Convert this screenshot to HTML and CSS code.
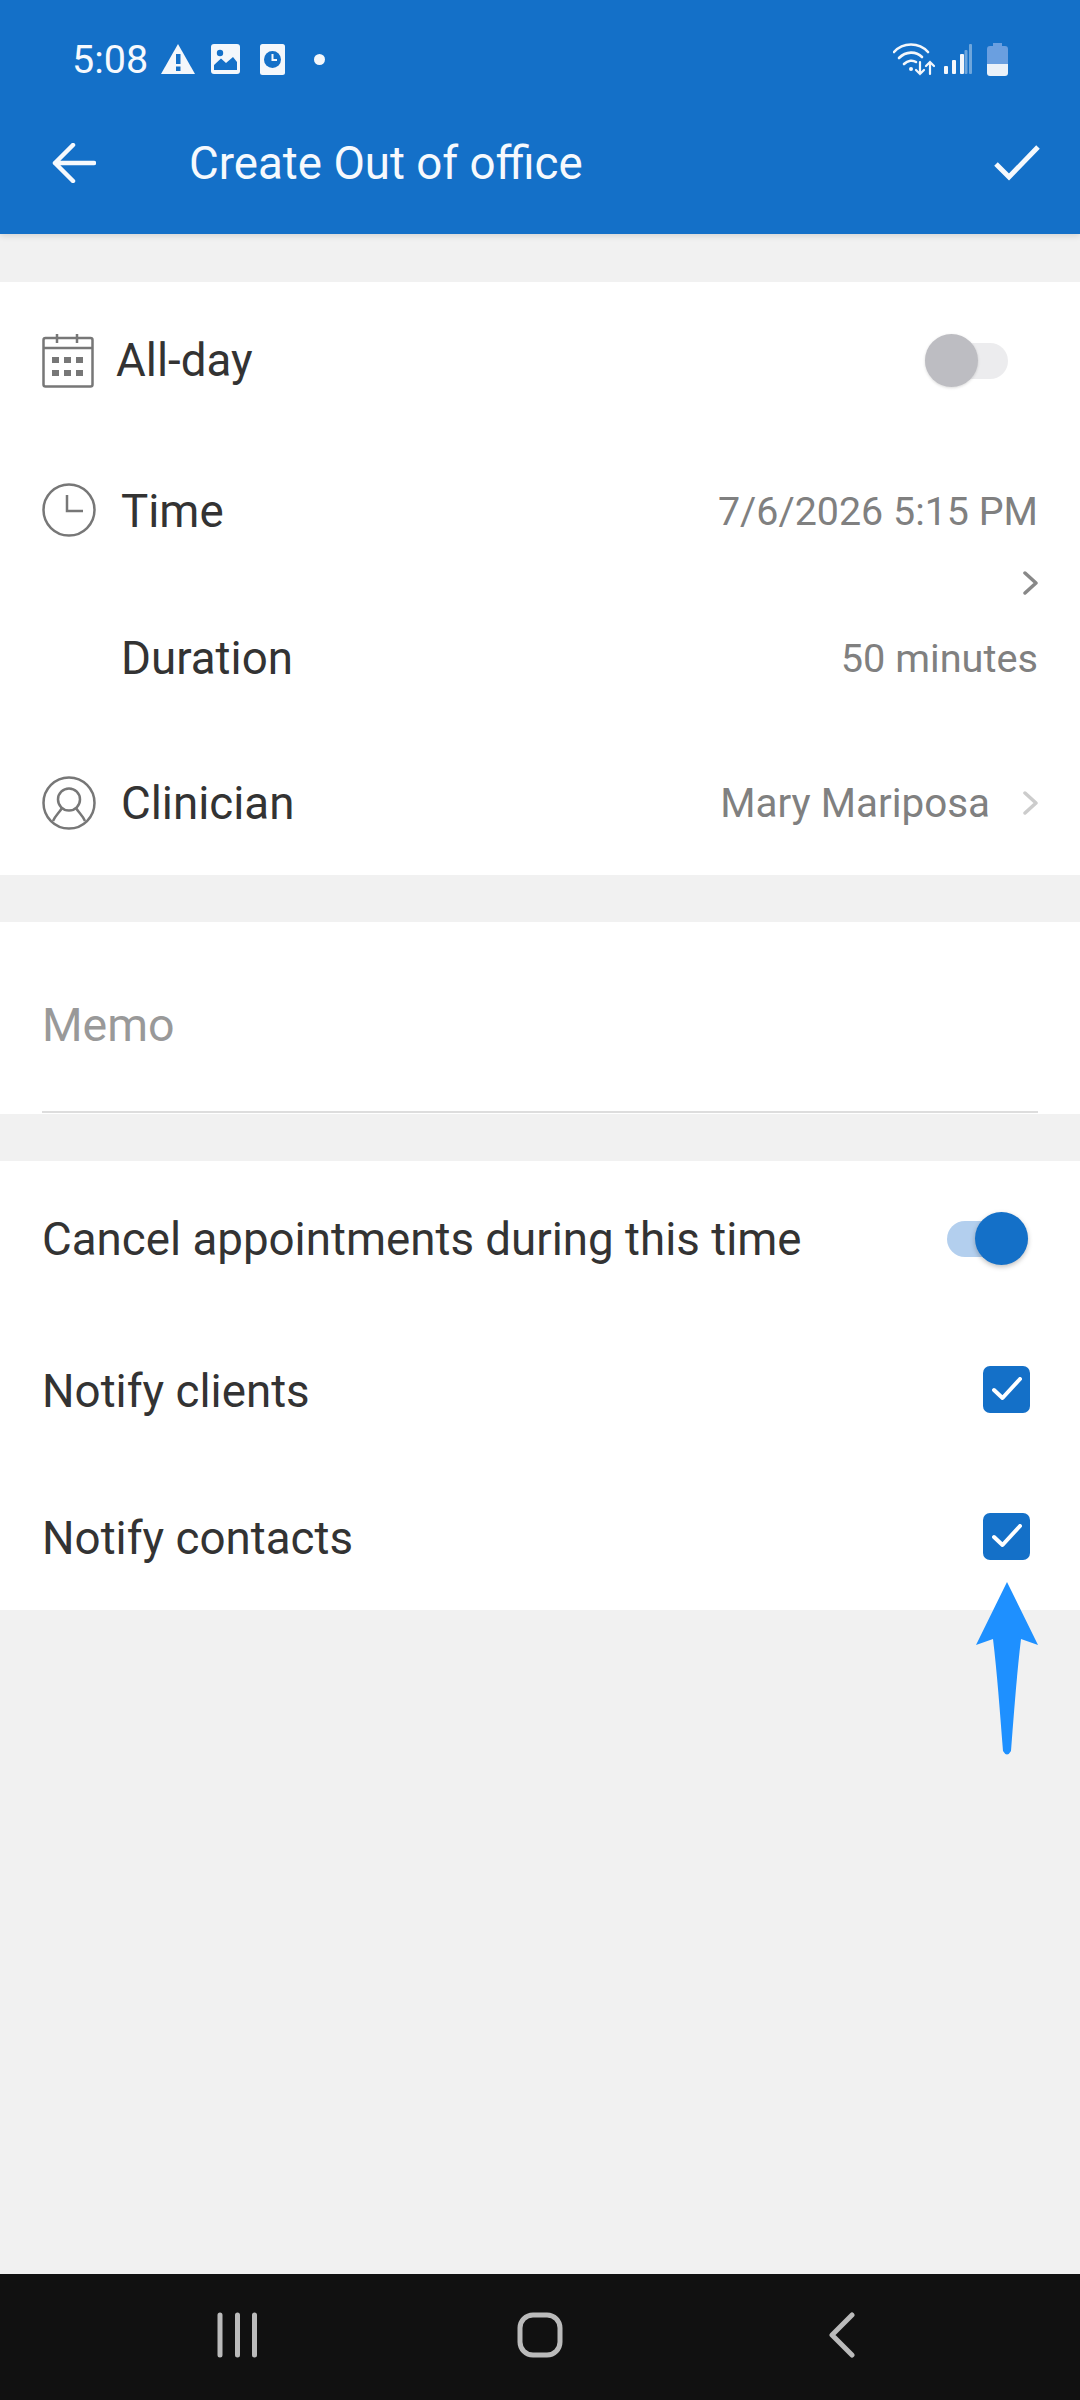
FILE: index.html
```html
<!DOCTYPE html>
<html lang="en">
<head>
    <meta charset="UTF-8">
    <meta name="viewport" content="width=device-width, initial-scale=1.0">
    <title>Create Out of office</title>
    <link rel="stylesheet" href="styles.css">
</head>
<body>
    <header class="app-header">
        <div class="status-bar">
            <span class="clock">5:08</span>
            <svg class="st-warn" width="34" height="30" viewBox="0 0 34 30"><path fill="#f4f7fb" d="M17 0 L34 30 H0 Z"/><rect x="15" y="10" width="4.5" height="10" fill="#1470c8"/><rect x="15" y="22.5" width="4.5" height="4.5" fill="#1470c8"/></svg>
            <svg class="st-image" width="29" height="30" viewBox="0 0 29 30"><rect width="29" height="30" rx="3" fill="#f4f7fb"/><circle cx="9" cy="9" r="3.2" fill="#1470c8"/><path fill="#1470c8" d="M3 26 V21 L10 14.500 L15 19 L22 13 L26 18 V26 Z"/></svg>
            <svg class="st-alarm" width="25" height="31" viewBox="0 0 25 31"><rect width="25" height="31" rx="2.500" fill="#f4f7fb"/><circle cx="12.500" cy="15.500" r="8.500" fill="#1470c8"/><path fill="none" stroke="#f4f7fb" stroke-width="2" d="M12.500 10 V16 H17"/></svg>
            <span class="st-dot"></span>
            <span class="spacer"></span>
            <svg class="st-wifi" width="42" height="33" viewBox="0 0 42 33"><g fill="none" stroke="#f4f7fb" stroke-width="2.600" stroke-linecap="round"><path d="M1 9 C10 -1 26 -1 35 9"/><path d="M6 15 C13 8 23 8 29 14"/><path d="M11 21 C15 17 20 17 23 19"/><path d="M27 19 V31 M23 27 L27 31 L31 27" stroke-width="2.200"/><path d="M37 31 V19 M33 23 L37 19 L41 23" stroke-width="2.200"/></g><circle cx="18" cy="26" r="2" fill="#f4f7fb"/></svg>
            <svg class="st-signal" width="28" height="30" viewBox="0 0 28 30"><g fill="#f4f7fb"><rect x="0" y="22" width="4" height="8" rx="1"/><rect x="8" y="16" width="4" height="14" rx="1"/><rect x="16" y="10" width="4" height="20" rx="1"/></g><g fill="#f4f7fb" fill-opacity=".4"><rect x="20.500" y="6" width="3" height="24" rx="1"/><rect x="25" y="0" width="3" height="30" rx="1"/></g></svg>
            <svg class="st-battery" width="21" height="33" viewBox="0 0 21 33"><path fill="#6a9fe0" d="M6 0 H15 V3 H18 Q21 3 21 6 V21 H0 V6 Q0 3 3 3 H6 Z"/><path fill="#eaf1f9" d="M0 21 H21 V30 Q21 33 18 33 H3 Q0 33 0 30 Z"/></svg>
        </div>
        <div class="toolbar">
            <svg class="back" width="44" height="40" viewBox="0 0 44 40"><path fill="none" stroke="#f6f9fd" stroke-width="4.500" stroke-linecap="round" stroke-linejoin="round" d="M42 20 H3 M21 2 L3 20 L21 38"/></svg>
            <h1 class="title">Create Out of office</h1>
            <svg class="done" width="46" height="36" viewBox="0 0 46 36"><path fill="none" stroke="#f6f9fd" stroke-width="5" d="M2 19 L15 32 L44 2"/></svg>
        </div>
    </header>

    <main class="content">
        <section class="card card-top">
            <div class="row row-allday">
                <svg class="row-icon" width="52" height="54" viewBox="0 0 52 54"><g fill="none" stroke="#777" stroke-width="2.500"><rect x="1.500" y="4" width="49" height="48.500" rx="2"/><path d="M1.500 14 H50.500 M15 0 V9 M35 0 V9"/></g><g fill="#777"><rect x="10" y="23" width="7" height="6"/><rect x="22" y="23" width="7" height="6"/><rect x="34" y="23" width="7" height="6"/><rect x="10" y="36" width="7" height="6"/><rect x="22" y="36" width="7" height="6"/><rect x="34" y="36" width="7" height="6"/></g></svg>
                <span class="label label-allday">All-day</span>
                <span class="toggle toggle-off"><span class="knob"></span></span>
            </div>
            <div class="row row-time">
                <svg class="row-icon icon-clock" width="54" height="54" viewBox="0 0 54 54"><g fill="none" stroke="#777" stroke-width="2.500"><circle cx="27" cy="27" r="25.500"/><path d="M25 12 V28 H41"/></g></svg>
                <span class="label">Time</span>
                <div class="time-value">
                    <span class="value value-date">7/6/2026 5:15 PM</span>
                    <svg class="chevron" width="15" height="24" viewBox="0 0 15 24"><path fill="none" stroke="#888" stroke-width="3.500" stroke-linecap="round" stroke-linejoin="round" d="M2 2 L13 12 L2 22"/></svg>
                </div>
            </div>
            <div class="row row-duration">
                <span class="label label-indent">Duration</span>
                <span class="value">50 minutes</span>
            </div>
            <div class="row row-clinician">
                <svg class="row-icon" width="54" height="54" viewBox="0 0 54 54"><g fill="none" stroke="#777" stroke-width="2.500"><circle cx="27" cy="27" r="25.500"/><circle cx="27" cy="23.500" r="11"/><path d="M11 45 C13 40 17 37 20 32 M43 45 C41 40 37 37 34 32"/></g></svg>
                <span class="label">Clinician</span>
                <span class="value value-clinician">Mary Mariposa</span>
                <svg class="chevron chevron-light" width="15" height="24" viewBox="0 0 15 24"><path fill="none" stroke="#ccc" stroke-width="3.500" stroke-linecap="round" stroke-linejoin="round" d="M2 2 L13 12 L2 22"/></svg>
            </div>
        </section>

        <section class="card card-memo">
            <div class="memo">Memo</div>
        </section>

        <section class="card card-options">
            <div class="row row-cancel">
                <span class="label">Cancel appointments during this time</span>
                <span class="toggle toggle-on"><span class="knob"></span></span>
            </div>
            <div class="row row-notify">
                <span class="label">Notify clients</span>
                <span class="checkbox"><svg width="30" height="24" viewBox="0 0 30 24"><path fill="none" stroke="#fff" stroke-width="4" stroke-linecap="round" stroke-linejoin="round" d="M2 13 L10.500 21 L28 2"/></svg></span>
            </div>
            <div class="row row-notify row-last">
                <span class="label">Notify contacts</span>
                <span class="checkbox"><svg width="30" height="24" viewBox="0 0 30 24"><path fill="none" stroke="#fff" stroke-width="4" stroke-linecap="round" stroke-linejoin="round" d="M2 13 L10.500 21 L28 2"/></svg></span>
            </div>
        </section>

        <!-- callout drawn over the screenshot -->
        <svg class="callout" width="62" height="174" viewBox="0 0 62 174"><path fill="#1e90ff" d="M31 0 L62 63 L45 57 C41 90 38 130 35 169 Q31 176 27 169 C24 130 21 90 17 57 L0 63 Z"/></svg>
    </main>

    <nav class="nav-bar">
        <svg class="nav-recents" width="43" height="46" viewBox="0 0 43 46"><g fill="none" stroke="#bbb" stroke-width="5" stroke-linecap="round"><path d="M3 3 V43 M20.500 3 V43 M37.500 3 V43"/></g></svg>
        <svg class="nav-home" width="46" height="46" viewBox="0 0 46 46"><rect x="3" y="3" width="40" height="40" rx="13" fill="none" stroke="#bbb" stroke-width="5"/></svg>
        <svg class="nav-back" width="26" height="46" viewBox="0 0 26 46"><path fill="none" stroke="#bbb" stroke-width="5" stroke-linecap="round" stroke-linejoin="round" d="M23 3 L3 23 L23 43"/></svg>
    </nav>
</body>
</html>
```

FILE: styles.css
```css
* { box-sizing: border-box; }

body {
    margin: 0;
    height: 2400px;
    display: flex;
    flex-direction: column;
    font-family: Roboto, sans-serif;
    background-color: #f1f1f1;
    color: #333;
    overflow: hidden;
}

svg { display: block; flex: none; }

/* Blue header */
.app-header {
    height: 234px;
    flex: none;
    background-color: #1470c8;
    color: #f6f9fd;
    box-shadow: 0 2px 6px rgba(0, 0, 0, 0.12);
    position: relative;
}
.status-bar {
    height: 92px;
    padding: 26px 72px 0 72px;
    display: flex;
    align-items: center;
}
.clock { font-size: 39.5px; width: 89px; }
.st-image { margin-left: 16px; }
.st-alarm { margin-left: 20px; }
.st-dot {
    width: 11px;
    height: 11px;
    margin-left: 29px;
    border-radius: 50%;
    background-color: #f4f7fb;
}
.spacer { flex: 1; }
.st-signal { margin-left: 9px; }
.st-battery { margin-left: 15px; }

.toolbar {
    height: 142px;
    padding: 0 40px 0 52px;
    display: flex;
    align-items: center;
}
.title {
    flex: 1;
    margin: 0 0 0 93px;
    font-size: 45.7px;
    font-weight: 400;
}

/* Cards */
.content {
    flex: 1;
    padding-top: 48px;
    position: relative;
}
.card { background-color: #fff; }
.card-memo { margin-top: 47px; height: 192px; padding: 0 42px; }
.card-options { margin-top: 47px; }

.row {
    display: flex;
    align-items: center;
    padding: 0 42px;
}
.label { font-size: 45.7px; line-height: 50px; margin-left: 25px; padding-top: 3px; }
.label-allday { margin-left: 22px; padding-top: 0; }
.label-indent { margin-left: 79px; }
.row-allday { height: 157px; padding-right: 72px; }
.row-time { height: 145px; align-items: flex-start; padding-top: 48px; }
.row-time .label { padding-top: 0; }
.icon-clock { margin-top: -4px; }
.row-duration { height: 146px; }
.row-clinician { height: 145px; }

.value {
    margin-left: auto;
    font-size: 39.7px;
    line-height: 50px;
    color: #808080;
}
.value-date { font-size: 39.4px; }
.row-duration .value, .value-clinician { padding-top: 3px; }
.time-value {
    margin-left: auto;
    display: flex;
    flex-direction: column;
    align-items: flex-end;
    gap: 34px;
}
.value-clinician { margin-right: 33px; font-size: 40.4px; }

.memo {
    height: 191px;
    padding-top: 78px;
    font-size: 46.5px;
    line-height: 50px;
    color: #999;
    border-bottom: 2px solid #ddd;
}

.row-cancel { height: 155px; padding-right: 52px; }
.row-cancel .label, .row-notify .label { margin-left: 0; }
.row-notify { height: 146px; padding-right: 50px; }
.row-notify .label { padding-top: 6px; }
.row-last { height: 148px; }

/* Toggles and checkboxes */
.toggle {
    margin-left: auto;
    position: relative;
    height: 36px;
    border-radius: 18px;
}
.knob {
    position: absolute;
    top: 50%;
    width: 53px;
    height: 53px;
    margin-top: -26.5px;
    border-radius: 50%;
}
.toggle-off { width: 83px; background-color: #ececee; }
.toggle-off .knob { left: 0; background-color: #bdbdc2; box-shadow: 0 1px 3px rgba(0, 0, 0, 0.15); }
.toggle-on { width: 81px; background-color: #b3cfee; }
.toggle-on .knob { right: 0; background-color: #1470c8; box-shadow: 0 2px 5px rgba(0, 0, 0, 0.25); }

.checkbox {
    margin-left: auto;
    width: 47px;
    height: 47px;
    border-radius: 7px;
    background-color: #1470c8;
    display: flex;
    align-items: center;
    justify-content: center;
}

.callout {
    position: absolute;
    left: 976px;
    top: 1348px;
}

/* Bottom nav */
.nav-bar {
    height: 126px;
    flex: none;
    background-color: #111;
    display: flex;
    align-items: center;
    padding: 0 0 4px 217px;
}
.nav-home { margin-left: 257px; }
.nav-back { margin-left: 266px; }
```
